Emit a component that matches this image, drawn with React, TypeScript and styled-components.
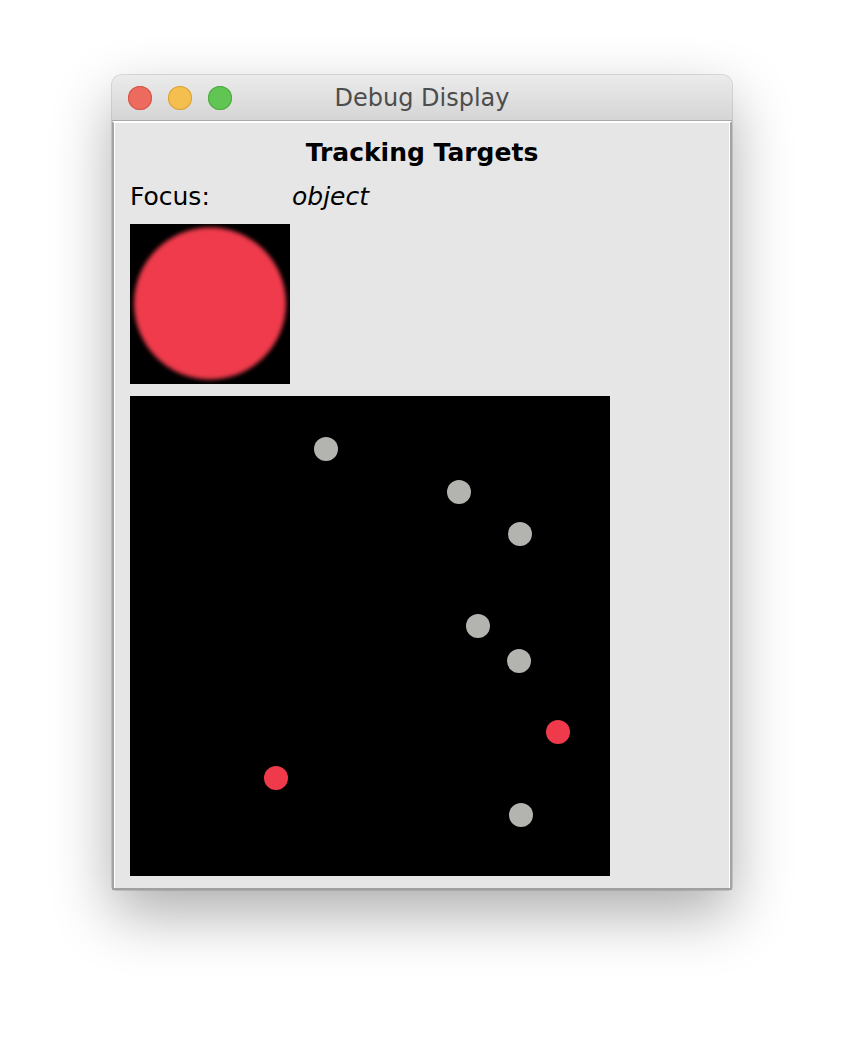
import styled, { createGlobalStyle } from "styled-components";

const GlobalStyle = createGlobalStyle`
  html, body {
    margin: 0;
    padding: 0;
    background: #ffffff;
  }
  body {
    font-family: "DejaVu Sans", "Liberation Sans", sans-serif;
  }
`;

const targets = [
  { x: 196, y: 53, hit: false },
  { x: 329, y: 96, hit: false },
  { x: 390, y: 138, hit: false },
  { x: 348, y: 230, hit: false },
  { x: 389, y: 265, hit: false },
  { x: 428, y: 336, hit: true },
  { x: 146, y: 382, hit: true },
  { x: 391, y: 419, hit: false },
];

export default function App() {
  return (
    <Page>
      <GlobalStyle />
      <Window>
        <TitleBar>
          <Lights>
            <Light $color="#ec6a5e" $edge="#d25548" />
            <Light $color="#f4bf4f" $edge="#d8a23a" />
            <Light $color="#61c554" $edge="#4ea83f" />
          </Lights>
          <WindowTitle>Debug Display</WindowTitle>
        </TitleBar>
        <Body>
          <Heading>Tracking Targets</Heading>
          <FocusRow>
            <FocusLabel>Focus:</FocusLabel>
            <FocusValue>object</FocusValue>
          </FocusRow>
          <Thumb>
            <svg width="160" height="160" viewBox="0 0 160 160">
              <defs>
                <filter id="soft" x="-10%" y="-10%" width="120%" height="120%">
                  <feGaussianBlur stdDeviation="2.2" />
                </filter>
              </defs>
              <rect width="160" height="160" fill="#000" />
              <circle cx="80" cy="79.5" r="76" fill="#ef3a4c" filter="url(#soft)" />
            </svg>
          </Thumb>
          <Field>
            <svg width="480" height="480" viewBox="0 0 480 480">
              <rect width="480" height="480" fill="#000" />
              {targets.map((t, i) => (
                <circle
                  key={i}
                  cx={t.x}
                  cy={t.y}
                  r="12"
                  fill={t.hit ? "#ef3a4c" : "#b3b3b0"}
                />
              ))}
            </svg>
          </Field>
        </Body>
      </Window>
    </Page>
  );
}

const Page = styled.div`
  padding: 75px 0 120px 112px;
  min-height: 1040px;
  box-sizing: border-box;
`;

const Window = styled.div`
  width: 620px;
  border-radius: 10px 10px 4px 4px;
  box-shadow: 0 24px 60px rgba(0, 0, 0, 0.32), 0 0 0 1px rgba(0, 0, 0, 0.12);
  background: #e6e6e6;
`;

const TitleBar = styled.div`
  position: relative;
  height: 45px;
  display: flex;
  align-items: center;
  justify-content: center;
  border-radius: 10px 10px 0 0;
  background: linear-gradient(#ebebeb, #d5d5d5);
  border-bottom: 1px solid #a9a9a9;
`;

const Lights = styled.div`
  position: absolute;
  left: 16px;
  top: 11px;
  display: flex;
  gap: 16px;
`;

const Light = styled.span<{ $color: string; $edge: string }>`
  width: 24px;
  height: 24px;
  border-radius: 50%;
  background: ${(p) => p.$color};
  box-shadow: inset 0 0 0 1px ${(p) => p.$edge};
`;

const WindowTitle = styled.div`
  font-size: 24px;
  color: #4d4d4d;
`;

const Body = styled.div`
  border: 2px solid #a3a3a3;
  border-top: 2px solid #ffffff;
  border-bottom-color: #a0a0a0;
  box-shadow: inset 1px 0 0 #ffffff, inset -1px 0 0 #ffffff;
  margin: 0 0 1px;
  padding: 15px 16px 12px;
  display: flex;
  flex-direction: column;
  align-items: flex-start;
  color: #000;
`;

const Heading = styled.div`
  align-self: stretch;
  text-align: center;
  font-size: 25px;
  font-weight: bold;
  line-height: 30px;
`;

const FocusRow = styled.div`
  display: flex;
  margin-top: 14px;
  font-size: 25px;
  line-height: 30px;
`;

const FocusLabel = styled.span`
  width: 162px;
`;

const FocusValue = styled.span`
  font-style: italic;
`;

const Thumb = styled.div`
  margin-top: 12px;
  width: 160px;
  height: 160px;
  svg {
    display: block;
  }
`;

const Field = styled.div`
  margin-top: 12px;
  width: 480px;
  height: 480px;
  svg {
    display: block;
  }
`;
